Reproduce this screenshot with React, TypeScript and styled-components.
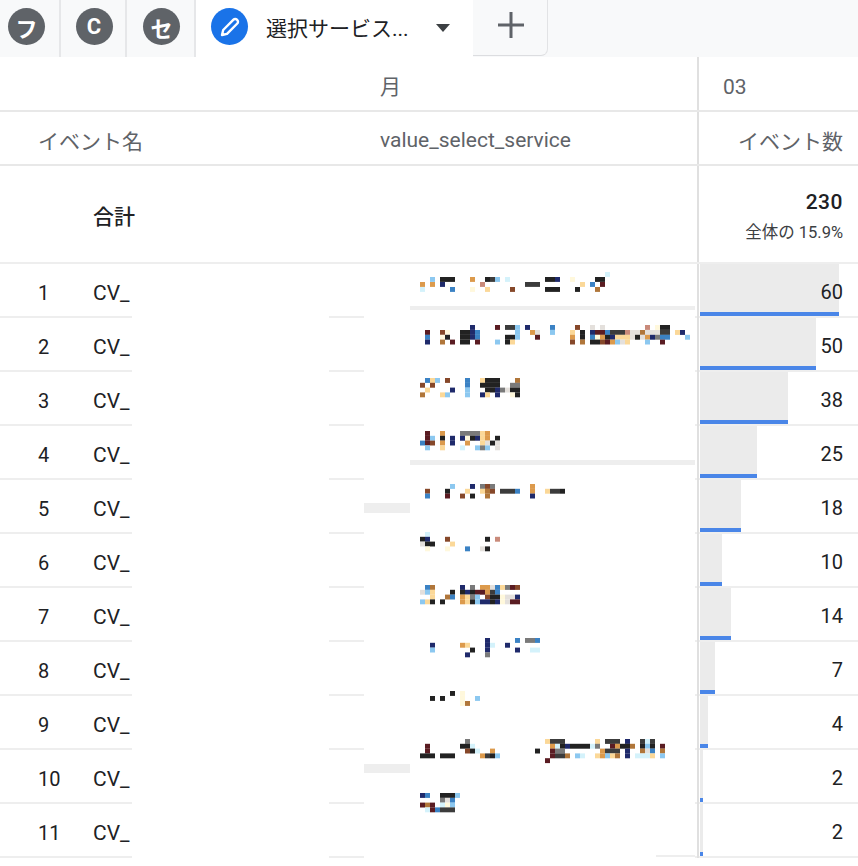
import styled, { createGlobalStyle } from 'styled-components';

const GlobalStyle = createGlobalStyle`
  html, body {
    margin: 0;
    height: 866px;
    overflow: hidden;
    background: #fff;
    font-family: Roboto, "Noto Sans CJK JP", sans-serif;
    color: #202124;
  }
`;

const ROW_LINE = '#eeeeee';
const COLUMNS = '699px 159px';

const TabBar = styled.div`
  display: flex;
  height: 57px;
  background: #f8f9fa;
`;

const Tab = styled.div<{ $width: number; $first?: boolean }>`
  box-sizing: border-box;
  width: ${(p) => p.$width}px;
  display: flex;
  align-items: center;
  justify-content: ${(p) => (p.$first ? 'flex-start' : 'center')};
  padding-left: ${(p) => (p.$first ? '8px' : '2px')};
  padding-bottom: 4px;
  border-right: 2px solid #e6e7e9;
`;

const ActiveTab = styled.div`
  width: 277px;
  display: flex;
  align-items: center;
  padding-left: 15px;
  padding-bottom: 4px;
  box-sizing: border-box;
  background: #fff;
`;

const AddTab = styled.div`
  width: 75px;
  height: 56px;
  display: flex;
  align-items: center;
  justify-content: center;
  padding: 0 0 5px 2px;
  box-sizing: border-box;
  border-radius: 0 0 7px 0;
  border-right: 1px solid #e2e3e5;
  border-bottom: 1px solid #dcdde0;
  color: #5f6368;
`;

const Badge = styled.span<{ $color: string }>`
  width: 37px;
  height: 37px;
  border-radius: 50%;
  background: ${(p) => p.$color};
  color: #fff;
  font-size: 22px;
  font-weight: 700;
  display: flex;
  align-items: center;
  justify-content: center;
  flex: none;
`;

const TabTitle = styled.span`
  margin: 4px 0 0 18px;
  width: 170px;
  font-size: 21px;
  line-height: 30px;
  color: #202124;
`;

const Caret = styled.span`
  width: 0;
  height: 0;
  margin-top: 2px;
  border-left: 7.5px solid transparent;
  border-right: 7.5px solid transparent;
  border-top: 8px solid #3c4043;
`;

const HeadRow = styled.div<{ $height: number }>`
  display: grid;
  grid-template-columns: ${COLUMNS};
  height: ${(p) => p.$height}px;
  box-sizing: border-box;
  border-bottom: 2px solid #e8e8e8;
  color: #5f6368;
  font-size: 21px;
`;

const HeadLabels = styled.div`
  display: grid;
  grid-template-columns: 380px 1fr;
  align-items: center;
  padding-top: 3px;
  border-right: 2px solid #e0e0e0;
`;

const HeadLabel = styled.span<{ $inset?: number }>`
  padding-left: ${(p) => p.$inset ?? 0}px;
`;

const HeadMetric = styled.div<{ $align: 'left' | 'right' }>`
  display: flex;
  align-items: center;
  justify-content: ${(p) => (p.$align === 'left' ? 'flex-start' : 'flex-end')};
  padding: ${(p) => (p.$align === 'left' ? '7px 0 0 24px' : '3px 15px 0 0')};
`;

const TotalRow = styled.div`
  display: grid;
  grid-template-columns: ${COLUMNS};
  height: 98px;
  box-sizing: border-box;
  border-bottom: 2px solid ${ROW_LINE};
`;

const TotalLabel = styled.div`
  display: flex;
  align-items: center;
  padding: 2px 0 0 93px;
  font-size: 21px;
  font-weight: 500;
  border-right: 2px solid #e0e0e0;
`;

const TotalValue = styled.div`
  display: flex;
  flex-direction: column;
  align-items: flex-end;
  justify-content: center;
  gap: 8px;
  padding: 4px 15px 0 0;
`;

const TotalNumber = styled.span`
  font-size: 21px;
  line-height: 26px;
  font-weight: 500;
  letter-spacing: 0.5px;
`;

const TotalShare = styled.span`
  font-size: 16.5px;
  line-height: 20px;
  color: #3c4043;
`;

const Body = styled.div`
  position: relative;
`;

const Row = styled.div`
  display: grid;
  grid-template-columns: ${COLUMNS};
  height: 54px;
  box-sizing: border-box;
  border-bottom: 2px solid ${ROW_LINE};
  font-size: 20px;
`;

const RowLabels = styled.div`
  display: grid;
  grid-template-columns: 55px 1fr;
  align-items: center;
  padding-left: 38px;
  padding-top: 4px;
  border-right: 2px solid #e0e0e0;
  margin-bottom: -2px;
`;

const EventName = styled.span`
  font-size: 21px;
`;

const MetricCell = styled.div`
  position: relative;
  display: flex;
  align-items: center;
  justify-content: flex-end;
  padding: 4px 15px 0 0;
`;

const Bar = styled.div`
  position: absolute;
  left: 1px;
  top: 0;
  bottom: 0;
  background: #ebebeb;
  border-bottom: 4px solid #4a86e8;
`;

const Value = styled.span`
  position: relative;
`;

const NameMask = styled.div`
  position: absolute;
  left: 132px;
  top: 0;
  width: 197px;
  height: 596px;
  background: #fff;
`;

const Mosaic = styled.svg`
  position: absolute;
  left: 364px;
  top: 0;
  display: block;
`;

// Pixelated service names, one entry per pixel line: page y, then "col+colour" cells.
const PALETTE: Record<string, string> = {
  k: '#222222',
  d: '#3c3c3c',
  g: '#7a7a7a',
  s: '#e4e0dc',
  n: '#1f2a6b',
  b: '#3b82c4',
  l: '#8cc8f0',
  c: '#d4f2fb',
  o: '#dc9a4c',
  t: '#b0763a',
  r: '#86482a',
  y: '#fbd898',
  w: '#fff8dc',
  m: '#5a1c22',
  p: '#c98a7a',
};

const MOSAIC_LINES: [number, string][] = [
  [272, '37c'],
  [277, '2l 4k 5k 6k 10o 13k 14d 15l 17c 25k 26k 27n 30w 35k 36k'],
  [282, '0o 2o 4n 12p 21d 22d 23d 32y 34b 36m'],
  [287, '0c 6b 10w 13y 18r 25k 26k 27k 31k 35t'],
  [325, '10n 15m 17d 18d 19l 21n 26b 31r 34s 36s 45p 47w 48k 49k'],
  [330, '1m 4r 5w 8k 9k 10n 11b 19l 22o 23s 26l 30y 32k 34n 35m 36m 37b 38d 39d 40d 41p 42s 43s 44t 45s 46s 47s 48d 49d 51y 52n'],
  [334.8, '1b 4w 5k 8k 9k 10n 11b 17k 18k 19l 23m 30o 32k 34b 35w 36o 37k 38n 39y 40y 41y 42s 43k 44s 45o 46n 47g 48b 49b 53l'],
  [339.6, '1n 4t 6m 8k 9k 11m 15l 17k 18y 30r 32t 34k 35k 36r 37m 38o 39l 40s 41y 45l 48m'],
  [378, '1b 2y 3l 5r 9b 12y 13k 14k 15k 19t'],
  [382.8, '0r 2r 9b 12k 13k 14k 15k 18g 19g'],
  [387.6, '1y 6n 9l 13k 14k 15n 16g 17s 18k 19k'],
  [392.4, '0t 4y 5l 9l 12n 13y 15n 18w 19k'],
  [431, '1m 4o 8g 9g 10g 11g 12y 13o'],
  [435.8, '1m 2l 4k 6n 8n 9w 10k 11n 12y 13o 15k'],
  [440.6, '0b 1m 2r 4o 6n 9o 12y 13s 14k 15s'],
  [445.4, '1l 4y 8c 11l 12g 13l 15s'],
  [484, '6l 10n 12g 13r 14g 22o'],
  [488.8, '1r 5k 9y 12y 13t 14r 16d 17d 18d 19b 22o 25y 26d 27d 28k'],
  [493.6, '1b 5m 8r 10k 13t 22n'],
  [532, '1c'],
  [536.8, '0k 1n 5r 13k 15p'],
  [541.6, '0s 1k 2k 6y'],
  [546.4, '1w 5w 9b 12s 13k'],
  [585, '1b 2t 8n 10g 12o 13o 14s 15b 16y 17g 18m 19r'],
  [589.8, '0s 1l 2y 6k 8k 9n 10k 11m 12m 13o 14d 15b'],
  [594.6, '2y 5t 6b 8o 9y 10g 11l 13r 14k 15k 16w 17s 18s 19n'],
  [599.4, '0l 1y 2k 4k 8o 9y 10k 11l 12n 13n 14k 15n 16w 17s 18m 19m'],
  [638, '13n 19b 21g 22g 23b'],
  [642.8, '2n 8o 9y 13n 14c 17n'],
  [647.6, '2l 10k 13n 19n 22c 23c'],
  [652.4, '9n 13g'],
  [691, '6k 8w'],
  [696, '2k 4k 8w 11l'],
  [701, '8w 9t'],
  [739, '9g 25y 26d 27d 28d 35y 37d 38d 39d 41n 44d 45c 46d'],
  [743.8, '1m 8k 9k 10c 26o 27c 28k 29n 30k 31k 32k 33k 34c 35g 38m 39o 40k 41k 42t 44k 45l 46k 48m'],
  [748.6, '1m 9r 10k 11c 14o 23k 26m 27g 28g 36o 37d 38d 39d 41n 44t 45s 46b 48t'],
  [753.4, '0k 1k 2k 4k 5k 6k 12o 13d 14k 15l 26m 27d 28d 29t 31l 32c 35y 36o 37l 38y 39t 41n 43c 44c 45c 46y 48l'],
  [758.2, '25m'],
  [793, '0n 1b 4k 5k 6k 7l'],
  [797.8, '4g 5s 6b'],
  [802.6, '0m 1t 2m 4c 5w 6l'],
  [807.4, '1c 2m 3b 4d 5d 6d'],
];

function RedactedNames() {
  return (
    <Mosaic width={331} height={596} viewBox="364 264 331 596" aria-hidden>
      <rect x={364} y={264} width={331} height={596} fill="#fff" />
      <rect x={410} y={306} width={285} height={4} fill="#eeeeee" />
      <rect x={410} y={460} width={285} height={5} fill="#eeeeee" />
      <rect x={364} y={503} width={46} height={10} fill="#eeeeee" />
      <rect x={364} y={764} width={46} height={9} fill="#eeeeee" />
      <rect x={656} y={855} width={39} height={2} fill="#eeeeee" />
      {MOSAIC_LINES.flatMap(([y, cells]) =>
        cells.split(' ').map((cell) => {
          const col = parseInt(cell, 10);
          const colour = PALETTE[cell[cell.length - 1]];
          return <rect key={`${y}-${col}`} x={420 + col * 5} y={y} width={5} height={4.9} fill={colour} />;
        }),
      )}
    </Mosaic>
  );
}

const ROWS = [
  { value: 60, bar: 139 },
  { value: 50, bar: 116 },
  { value: 38, bar: 88 },
  { value: 25, bar: 57 },
  { value: 18, bar: 41 },
  { value: 10, bar: 22 },
  { value: 14, bar: 31 },
  { value: 7, bar: 15 },
  { value: 4, bar: 8 },
  { value: 2, bar: 3 },
  { value: 2, bar: 3 },
];

export default function App() {
  return (
    <>
      <GlobalStyle />
      <TabBar>
        <Tab $width={61} $first>
          <Badge $color="#5f6368">フ</Badge>
        </Tab>
        <Tab $width={66}>
          <Badge $color="#5f6368">C</Badge>
        </Tab>
        <Tab $width={69}>
          <Badge $color="#5f6368">セ</Badge>
        </Tab>
        <ActiveTab>
          <Badge $color="#1a73e8">
            <svg width="24" height="24" viewBox="0 0 24 24" fill="none" stroke="#fff" strokeWidth="2.4" strokeLinejoin="round" aria-hidden>
              <path d="M4 20l1.2-5L15.5 4.7a2.4 2.4 0 0 1 3.4 0l.4.4a2.4 2.4 0 0 1 0 3.4L9 18.8z" />
            </svg>
          </Badge>
          <TabTitle>選択サービス...</TabTitle>
          <Caret />
        </ActiveTab>
        <AddTab>
          <svg width="26" height="26" viewBox="0 0 26 26" stroke="currentColor" strokeWidth="3" aria-hidden>
            <path d="M13 0v26M0 13h26" />
          </svg>
        </AddTab>
      </TabBar>
      <HeadRow $height={55}>
        <HeadLabels>
          <span />
          <HeadLabel>月</HeadLabel>
        </HeadLabels>
        <HeadMetric $align="left">03</HeadMetric>
      </HeadRow>
      <HeadRow $height={54}>
        <HeadLabels>
          <HeadLabel $inset={38}>イベント名</HeadLabel>
          <HeadLabel>value_select_service</HeadLabel>
        </HeadLabels>
        <HeadMetric $align="right">イベント数</HeadMetric>
      </HeadRow>
      <TotalRow>
        <TotalLabel>合計</TotalLabel>
        <TotalValue>
          <TotalNumber>230</TotalNumber>
          <TotalShare>全体の 15.9%</TotalShare>
        </TotalValue>
      </TotalRow>
      <Body>
        {ROWS.map((row, i) => (
          <Row key={i}>
            <RowLabels>
              <span>{i + 1}</span>
              <EventName>CV_</EventName>
            </RowLabels>
            <MetricCell>
              <Bar style={{ width: row.bar }} />
              <Value>{row.value}</Value>
            </MetricCell>
          </Row>
        ))}
        <NameMask />
        <RedactedNames />
      </Body>
    </>
  );
}
